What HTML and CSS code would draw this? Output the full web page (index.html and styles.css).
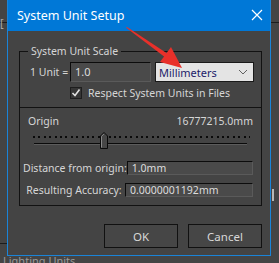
FILE: index.html
```html
<!DOCTYPE html>
<html lang="en">
<head>
  <meta charset="UTF-8">
  <title>System Unit Setup</title>
  <link rel="stylesheet" href="styles.css">
</head>
<body>

  <div class="desk">
    <div class="side side-left"><span class="bracket">[</span></div>

    <div class="dialog">
      <div class="titlebar">
        <span class="title">System Unit Setup</span>
        <svg class="close" width="12" height="12" viewBox="0 0 12 12">
          <path d="M1 1 L11 11 M11 1 L1 11" stroke="#ffffff" stroke-width="1.2" fill="none"/>
        </svg>
      </div>

      <div class="content">
        <fieldset class="group">
          <legend>System Unit Scale</legend>

          <div class="unit-row">
            <span class="unit-label">1 Unit =</span>
            <div class="field unit-field">1.0</div>
            <div class="select">
              <span>Millimeters</span>
              <svg width="10" height="6" viewBox="0 0 10 6">
                <path d="M1 1 L5 5 L9 1" stroke="#606060" stroke-width="1" fill="none"/>
              </svg>
            </div>
          </div>

          <div class="check-row">
            <span class="check">
              <svg width="10" height="10" viewBox="0 0 10 10">
                <path d="M1.5 5 L4 7.5 L8.5 1.5" stroke="#e0e0e0" stroke-width="1.6" fill="none"/>
              </svg>
            </span>
            <span>Respect System Units in Files</span>
          </div>

          <div class="origin">
            <div class="origin-head">
              <span>Origin</span>
              <span>16777215.0mm</span>
            </div>

            <div class="slider">
              <div class="ticks"></div>
              <div class="track"></div>
              <svg class="thumb" width="8" height="17" viewBox="0 0 8 17">
                <path d="M0.5 16.5 L0.5 4 L4 0.5 L7.5 4 L7.5 16.5 Z" fill="#474747" stroke="#0a0a0a" stroke-width="1"/>
                <path d="M1.5 15.5 L1.5 4.4 L4 1.9" stroke="#8a8a8a" stroke-width="1" fill="none"/>
              </svg>
            </div>

            <div class="field-row first">
              <span class="field-label">Distance from origin:</span>
              <div class="field">1.0mm</div>
            </div>
            <div class="field-row">
              <span class="field-label">Resulting Accuracy:</span>
              <div class="field">0.0000001192mm</div>
            </div>
          </div>
        </fieldset>

        <div class="buttons">
          <button>OK</button>
          <button>Cancel</button>
        </div>
      </div>
    </div>

    <div class="side side-right"><div class="scroll"></div></div>
  </div>

  <div class="below">Lighting Units</div>

  <svg class="arrow" width="279" height="263" viewBox="0 0 279 263">
    <path d="M126 27.5 L127 27 L168 54 L166 58 Z" fill="#e8302a"/>
    <path d="M182 68 L160 62 L171 47 Z" fill="#e8302a"/>
  </svg>

</body>
</html>
```

FILE: styles.css
```css
body {
  margin: 0;
  padding: 0;
  width: 279px;
  height: 263px;
  overflow: hidden;
  position: relative;
  background-color: #444444;
  font-family: 'Noto Sans', 'Open Sans', sans-serif;
  font-size: 10.5px;
  color: #d6d6d6;
  white-space: nowrap;
}

.desk {
  display: flex;
  height: 256px;
}

.side {
  position: relative;
}

.side-left {
  width: 7px;
  border-top: 1px solid #1c1c1c;
  margin-top: 22px;
  height: 220px;
  border-bottom: 1px solid #1c1c1c;
}

.bracket {
  position: absolute;
  top: -8px;
  left: 0;
  color: #aaaaaa;
  font-size: 11px;
}

.side-right {
  width: 8px;
  margin-top: 22px;
  border-top: 1px solid #1c1c1c;
  height: 233px;
}

.scroll {
  position: absolute;
  top: 166px;
  left: 1px;
  width: 2px;
  height: 12px;
  background-color: #b8b8b8;
}

.dialog {
  width: 262px;
  height: 255px;
  border: 1px solid #1a84d8;
  border-top: none;
  background-color: #444444;
}

.titlebar {
  height: 31px;
  background-color: #0078d7;
  display: flex;
  align-items: center;
  justify-content: space-between;
  padding: 0 7px 0 9px;
}

.title {
  color: #ffffff;
  font-size: 12.5px;
  margin-top: -1px;
}

.close {
  margin-top: -2px;
}

.content {
  padding: 0 8px 7px 11px;
}

.group {
  margin: 13px 0 0 0;
  padding: 0;
  border: 1px solid #121212;
  min-inline-size: 0;
}

.group legend {
  margin-left: 8px;
  padding: 0 3px;
  line-height: 14px;
}

.unit-row {
  display: flex;
  align-items: center;
  height: 20px;
  margin-top: 4px;
  padding-left: 10px;
}

.unit-label {
  width: 40px;
}

.field {
  height: 14px;
  line-height: 12px;
  padding: 0 4px;
  background-color: #4a4a4a;
  border-top: 1px solid #0c0c0c;
  border-left: 1px solid #0c0c0c;
  border-right: 1px solid #5a5a5a;
  border-bottom: 1px solid #5a5a5a;
  color: #dcdcdc;
  box-sizing: border-box;
}

.unit-field {
  width: 81px;
  height: 20px;
  line-height: 18px;
  font-size: 11px;
}

.select {
  margin-left: 4px;
  width: 99px;
  height: 20px;
  box-sizing: border-box;
  border: 1px solid #1a1a1a;
  background-color: #e4e4e4;
  color: #1c1c6a;
  display: flex;
  align-items: center;
  justify-content: space-between;
  padding: 0 5px 0 3px;
  font-size: 11px;
}

.check-row {
  display: flex;
  align-items: center;
  height: 12px;
  margin-top: 5px;
  padding-left: 50px;
  gap: 6px;
}

.check {
  width: 12px;
  height: 12px;
  box-sizing: border-box;
  background-color: #363636;
  border: 1px solid #1e1e1e;
  display: flex;
  align-items: center;
  justify-content: center;
}

.origin {
  margin-top: 8px;
  border-top: 1px solid #121212;
  padding: 6px 8px 8px 3px;
}

.origin-head {
  display: flex;
  justify-content: space-between;
  line-height: 14px;
  padding-left: 5px;
}

.slider {
  position: relative;
  height: 20px;
  margin-left: 10px;
}

.ticks {
  position: absolute;
  top: 8px;
  left: 0;
  width: 217px;
  height: 2px;
  background: repeating-linear-gradient(to right, #0a0a0a 0, #0a0a0a 2px, transparent 2px, transparent 5.4px);
}

.track {
  position: absolute;
  top: 15px;
  left: 1px;
  width: 213px;
  height: 0;
  border-top: 1px solid #0a0a0a;
  border-bottom: 1px solid #5c5c5c;
}

.thumb {
  position: absolute;
  top: 4px;
  left: 67px;
}

.field-row {
  display: flex;
  align-items: center;
  margin-top: 8px;
}

.field-row.first {
  margin-top: 13px;
}

.field-label {
  flex: 1;
  text-align: center;
}

.field-row .field {
  width: 128px;
}

.buttons {
  display: flex;
  justify-content: flex-end;
  gap: 10px;
  margin-top: 18px;
}

button {
  width: 74px;
  height: 24px;
  background-color: #464646;
  border: 1px solid #111111;
  color: #d8d8d8;
  font-family: 'Noto Sans', 'Open Sans', sans-serif;
  font-size: 11.5px;
  padding: 0;
}

.below {
  padding-left: 3px;
  margin-top: -2px;
  line-height: 14px;
  color: #9a9a9a;
  font-size: 11px;
}

.arrow {
  position: absolute;
  top: 0;
  left: 0;
  pointer-events: none;
}
```
